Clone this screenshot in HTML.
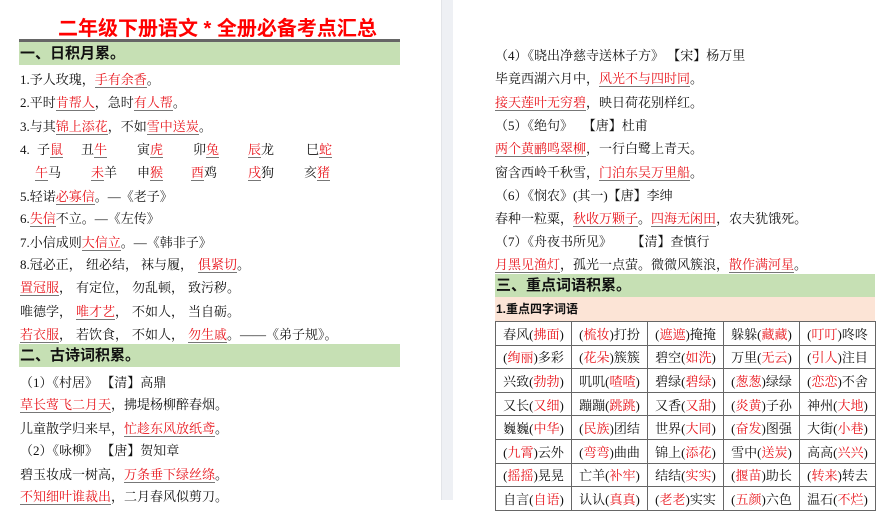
<!DOCTYPE html>
<html><head><meta charset="utf-8"><style>
body{margin:0;width:887px;height:500px;overflow:hidden;background:#fff;position:relative;font-family:"Liberation Serif","Noto Serif CJK SC",serif;color:#111}
.l{position:absolute;font-size:13px;line-height:16px;white-space:nowrap}
.r{color:#e8141b;border-bottom:1px solid #777}
.rr{color:#e8141b}
.band{position:absolute;background:#c6e0b4;font-family:"Liberation Sans","Noto Sans CJK SC",sans-serif;font-weight:bold;font-size:15px;line-height:24px;padding-left:1px}
.gap{position:absolute;left:441px;top:0;width:11px;height:500px;background:#eef0f4;border-left:1px solid #e2e4e8}
table{position:absolute;left:495px;top:321px;border-collapse:collapse}
td{border:1px solid #666;width:75px;height:22.6px;padding:0;text-align:center;font-size:13px;white-space:nowrap}
</style></head><body>
<div style="position:absolute;left:58px;top:16px;font-family:'Liberation Sans','Noto Sans CJK SC',sans-serif;font-weight:bold;font-size:20px;color:#f00;line-height:26px">二年级下册语文 * 全册必备考点汇总</div>
<div style="position:absolute;left:19px;top:39px;width:381px;height:3px;background:#666"></div>
<div class="band" style="left:19px;top:42px;width:380px;height:23px">一、日积月累。</div>
<div class="l" style="left:20px;top:72px">1.予人玫瑰，<span class="r">手有余香</span>。</div>
<div class="l" style="left:20px;top:95px">2.平时<span class="r">肯帮人</span>，急时<span class="r">有人帮</span>。</div>
<div class="l" style="left:20px;top:119px">3.与其<span class="r">锦上添花</span>，不如<span class="r">雪中送炭</span>。</div>
<div class="l" style="left:20px;top:142px">4.</div>
<div class="l" style="left:37px;top:142px">子<span class="r">鼠</span></div>
<div class="l" style="left:81px;top:142px">丑<span class="r">牛</span></div>
<div class="l" style="left:137px;top:142px">寅<span class="r">虎</span></div>
<div class="l" style="left:193px;top:142px">卯<span class="r">兔</span></div>
<div class="l" style="left:248px;top:142px"><span class="r">辰</span>龙</div>
<div class="l" style="left:306px;top:142px">巳<span class="r">蛇</span></div>
<div class="l" style="left:35px;top:165px"><span class="r">午</span>马</div>
<div class="l" style="left:91px;top:165px"><span class="r">未</span>羊</div>
<div class="l" style="left:137px;top:165px">申<span class="r">猴</span></div>
<div class="l" style="left:191px;top:165px"><span class="r">酉</span>鸡</div>
<div class="l" style="left:248px;top:165px"><span class="r">戌</span>狗</div>
<div class="l" style="left:304px;top:165px">亥<span class="r">猪</span></div>
<div class="l" style="left:20px;top:189px">5.轻诺<span class="r">必寡信</span>。—《老子》</div>
<div class="l" style="left:20px;top:211px">6.<span class="r">失信</span>不立。—《左传》</div>
<div class="l" style="left:20px;top:235px">7.小信成则<span class="r">大信立</span>。—《韩非子》</div>
<div class="l" style="left:20px;top:257px">8.冠必正，</div><div class="l" style="left:86px;top:257px">纽必结，</div><div class="l" style="left:141px;top:257px">袜与履，</div><div class="l" style="left:198px;top:257px"><span class="r">俱紧切</span>。</div>
<div class="l" style="left:20px;top:280px"><span class="r">置冠服</span>，</div><div class="l" style="left:76px;top:280px">有定位，</div><div class="l" style="left:132px;top:280px">勿乱顿，</div><div class="l" style="left:188px;top:280px">致污秽。</div>
<div class="l" style="left:20px;top:304px">唯德学，</div><div class="l" style="left:76px;top:304px"><span class="r">唯才艺</span>，</div><div class="l" style="left:132px;top:304px">不如人，</div><div class="l" style="left:188px;top:304px">当自砺。</div>
<div class="l" style="left:20px;top:327px"><span class="r">若衣服</span>，</div><div class="l" style="left:76px;top:327px">若饮食，</div><div class="l" style="left:132px;top:327px">不如人，</div><div class="l" style="left:188px;top:327px"><span class="r">勿生戚</span>。——《弟子规》。</div>
<div class="band" style="left:19px;top:344px;width:380px;height:23px">二、古诗词积累。</div>
<div class="l" style="left:20px;top:375px">（1）《村居》 【清】高鼎</div>
<div class="l" style="left:20px;top:397px"><span class="r">草长莺飞二月天</span>，拂堤杨柳醉春烟。</div>
<div class="l" style="left:20px;top:421px">儿童散学归来早，<span class="r">忙趁东风放纸鸢</span>。</div>
<div class="l" style="left:20px;top:443px">（2）《咏柳》 【唐】贺知章</div>
<div class="l" style="left:20px;top:467px">碧玉妆成一树高，<span class="r">万条垂下绿丝绦</span>。</div>
<div class="l" style="left:20px;top:489px"><span class="r">不知细叶谁裁出</span>，二月春风似剪刀。</div>
<div class="gap"></div>
<div class="l" style="left:495px;top:48px">（4）《晓出净慈寺送林子方》 【宋】杨万里</div>
<div class="l" style="left:495px;top:71px">毕竟西湖六月中，<span class="r">风光不与四时同</span>。</div>
<div class="l" style="left:495px;top:95px"><span class="r">接天莲叶无穷碧</span>，映日荷花别样红。</div>
<div class="l" style="left:495px;top:118px">（5）《绝句》 　【唐】杜甫</div>
<div class="l" style="left:495px;top:141px"><span class="r">两个黄鹂鸣翠柳</span>，一行白鹭上青天。</div>
<div class="l" style="left:495px;top:165px">窗含西岭千秋雪，<span class="r">门泊东吴万里船</span>。</div>
<div class="l" style="left:495px;top:188px">（6）《悯农》(其一)【唐】李绅</div>
<div class="l" style="left:495px;top:211px">春种一粒粟，<span class="r">秋收万颗子</span>。<span class="r">四海无闲田</span>，农夫犹饿死。</div>
<div class="l" style="left:495px;top:234px">（7）《舟夜书所见》 　 【清】查慎行</div>
<div class="l" style="left:495px;top:257px"><span class="r">月黑见渔灯</span>，孤光一点萤。微微风簇浪，<span class="r">散作满河星</span>。</div>
<div class="band" style="left:495px;top:274px;width:379px;height:23px">三、重点词语积累。</div>
<div class="band" style="left:495px;top:297px;width:379px;height:24px;background:#fce4d6;font-size:12px">1.重点四字词语</div>
<table>
<tr><td>春风(<span class="rr">拂面</span>)</td><td>(<span class="rr">梳妆</span>)打扮</td><td>(<span class="rr">遮遮</span>)掩掩</td><td>躲躲(<span class="rr">藏藏</span>)</td><td>(<span class="rr">叮叮</span>)咚咚</td></tr>
<tr><td>(<span class="rr">绚丽</span>)多彩</td><td>(<span class="rr">花朵</span>)簇簇</td><td>碧空(<span class="rr">如洗</span>)</td><td>万里(<span class="rr">无云</span>)</td><td>(<span class="rr">引人</span>)注目</td></tr>
<tr><td>兴致(<span class="rr">勃勃</span>)</td><td>叽叽(<span class="rr">喳喳</span>)</td><td>碧绿(<span class="rr">碧绿</span>)</td><td>(<span class="rr">葱葱</span>)绿绿</td><td>(<span class="rr">恋恋</span>)不舍</td></tr>
<tr><td>又长(<span class="rr">又细</span>)</td><td>蹦蹦(<span class="rr">跳跳</span>)</td><td>又香(<span class="rr">又甜</span>)</td><td>(<span class="rr">炎黄</span>)子孙</td><td>神州(<span class="rr">大地</span>)</td></tr>
<tr><td>巍巍(<span class="rr">中华</span>)</td><td>(<span class="rr">民族</span>)团结</td><td>世界(<span class="rr">大同</span>)</td><td>(<span class="rr">奋发</span>)图强</td><td>大街(<span class="rr">小巷</span>)</td></tr>
<tr><td>(<span class="rr">九霄</span>)云外</td><td>(<span class="rr">弯弯</span>)曲曲</td><td>锦上(<span class="rr">添花</span>)</td><td>雪中(<span class="rr">送炭</span>)</td><td>高高(<span class="rr">兴兴</span>)</td></tr>
<tr><td>(<span class="rr">摇摇</span>)晃晃</td><td>亡羊(<span class="rr">补牢</span>)</td><td>结结(<span class="rr">实实</span>)</td><td>(<span class="rr">揠苗</span>)助长</td><td>(<span class="rr">转来</span>)转去</td></tr>
<tr><td>自言(<span class="rr">自语</span>)</td><td>认认(<span class="rr">真真</span>)</td><td>(<span class="rr">老老</span>)实实</td><td>(<span class="rr">五颜</span>)六色</td><td>温石(<span class="rr">不烂</span>)</td></tr>
</table>
</body></html>
